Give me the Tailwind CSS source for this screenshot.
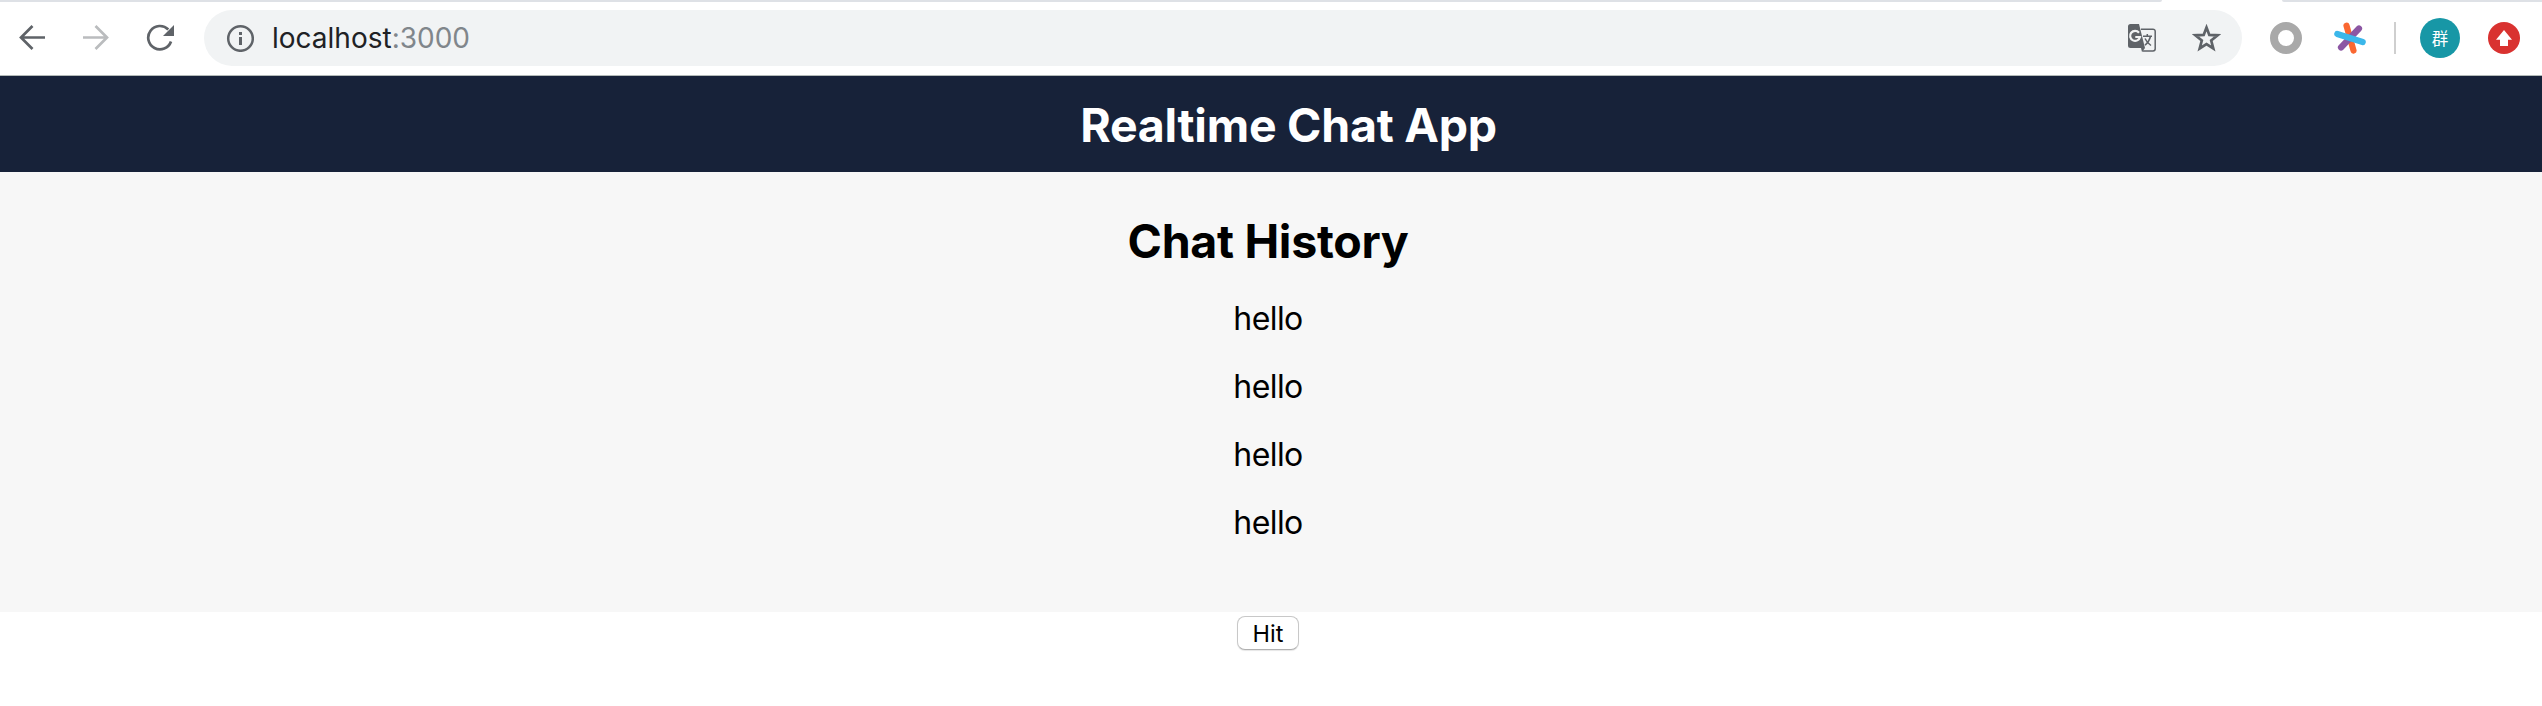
<!DOCTYPE html>
<html lang="en">
<head>
<meta charset="utf-8">
<title>Realtime Chat App</title>
<script src="https://cdn.jsdelivr.net/npm/@tailwindcss/browser@4"></script>
</head>
<body class="min-h-screen overflow-hidden bg-white font-['Inter','Noto_Sans_CJK_JP',sans-serif] text-black">
<div class="flex h-[2px] justify-between overflow-hidden">
  <div class="h-[2px] w-[2162px] rounded-br-[2px] bg-[#dee1e6]"></div>
  <div class="h-[2px] w-[260px] rounded-bl-[2px] bg-[#dee1e6]"></div>
</div>
<div class="flex h-[74px] items-center border-b border-[#b3bab8] pb-px pl-[18px]">
  <svg class="size-7 shrink-0" viewBox="0 0 28 28" fill="none" stroke="#5f6368" stroke-width="2.7"><path d="M27 13.5H3M14.5 2 3 13.5 14.5 25"/></svg>
  <svg class="ml-9 size-7 shrink-0" viewBox="0 0 28 28" fill="none" stroke="#babcbe" stroke-width="2.7"><path d="M1 13.5h24M13.5 2 25 13.5 13.5 25"/></svg>
  <svg class="ml-9 size-7 shrink-0" viewBox="0 0 28 28"><path d="M25 17.5A11.7 11.7 0 1 1 22.3 5.5" fill="none" stroke="#5f6368" stroke-width="2.7"/><path d="M28 1v11H17z" fill="#5f6368"/></svg>
  <div class="ml-[30px] flex h-14 w-[2038px] shrink-0 items-center rounded-full bg-[#f1f3f4] pl-[22px]">
    <svg class="size-7 shrink-0" viewBox="0 0 28 28"><circle cx="14.5" cy="14.5" r="12.3" fill="none" stroke="#5f6368" stroke-width="2.5"/><path d="M13 13h3v8h-3zM13 8h3v3h-3z" fill="#5f6368"/></svg>
    <div class="ml-[18px] text-[28px] leading-8 text-[#202124]">localhost<span class="text-[#80868b]">:3000</span></div>
    <svg class="mr-9 ml-auto size-7 shrink-0" viewBox="0 0 28 28"><path d="M13 5.2h12a2.200 2.200 0 0 1 2.200 2.200v17.400a2.200 2.200 0 0 1-2.200 2.200H14.500" fill="none" stroke="#5f6368" stroke-width="1.5"/><path d="M2.500 0H11l6 24H2.500A2.500 2.500 0 0 1 0 21.500v-19A2.500 2.500 0 0 1 2.500 0zM13 24h4l-3 4z" fill="#5f6368"/><path d="M11 8.700a5 5 0 1 0 1 4.300H7.300" fill="none" stroke="#f1f3f4" stroke-width="2.2"/><path d="M15 12.300h9M19.300 10v2.300M22.500 12.500c-.8 3.500-3 6.500-5.500 8.800M17 14.500c1.200 2.500 3.500 5.300 6 7" fill="none" stroke="#5f6368" stroke-width="1.5"/></svg>
    <svg class="mr-[21px] h-7 w-[29px] shrink-0" viewBox="0 0 29 28"><path d="M14.500 3.500 17.300 10.900 25.600 11.300 19.200 16.500 21.300 24.500 14.500 20 7.700 24.500 9.800 16.500 3.400 11.300 11.700 10.900z" fill="none" stroke="#5f6368" stroke-width="2.7"/></svg>
  </div>
  <div class="ml-7 size-8 shrink-0 rounded-full border-8 border-[#a9a9a9]"></div>
  <svg class="ml-8 size-8 shrink-0" viewBox="0 0 32 32" fill="none" stroke-width="6.2" stroke-linecap="round"><path d="m12.500 3.700 7 24.800" stroke="#fa6731"/><path d="M25 6.500 7 25.500" stroke="#8c56a3"/><path d="m3.300 12 25.400 8" stroke="#3bb7ea"/></svg>
  <div class="ml-7 h-8 w-[2px] shrink-0 bg-[#cfcfcf]"></div>
  <div class="ml-6 flex size-10 shrink-0 items-center justify-center rounded-full bg-[#1797a6] font-['Noto_Sans_CJK_JP',sans-serif] text-[16.5px] leading-4 text-white">群</div>
  <svg class="ml-7 size-8 shrink-0" viewBox="0 0 32 32"><circle cx="16" cy="16" r="16" fill="#d93230"/><path d="m16 8 8 9.700h-4V24h-8v-6.300H8z" fill="#fff"/></svg>
</div>
<header class="flex h-24 items-center justify-center bg-[#172239] pt-[2px] pl-[35px]">
  <h1 class="text-[46.5px] leading-[56px] font-bold tracking-[-0.25px] text-white">Realtime Chat App</h1>
</header>
<section class="flex h-[440px] flex-col items-center bg-[#f7f7f7] pt-[41px] pr-[6px]">
  <h2 class="text-[46.5px] leading-[56px] font-bold tracking-[-0.3px]">Chat History</h2>
  <div class="mt-[30px] flex flex-col gap-7 text-[32px] leading-10 tracking-[-0.6px]">
    <p>hello</p>
    <p>hello</p>
    <p>hello</p>
    <p>hello</p>
  </div>
</section>
<div class="flex justify-center pt-1 pr-[6px]">
  <button class="h-[34px] w-[62px] rounded-[8px] border border-[#c8c8c8] border-b-[#b0b0b0] bg-white pt-px text-[23.5px] leading-8 shadow-[0_1px_1px_#0000001a]">Hit</button>
</div>
</body>
</html>
